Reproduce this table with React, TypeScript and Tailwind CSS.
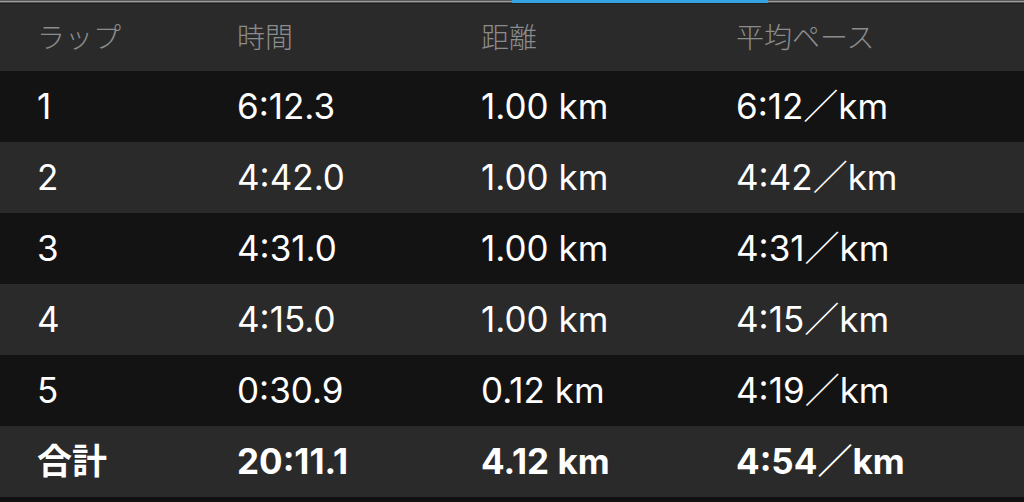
import React from "react";

const rows = [
  ["1", "6:12.3", "1.00 km", "6:12／km"],
  ["2", "4:42.0", "1.00 km", "4:42／km"],
  ["3", "4:31.0", "1.00 km", "4:31／km"],
  ["4", "4:15.0", "1.00 km", "4:15／km"],
  ["5", "0:30.9", "0.12 km", "4:19／km"],
];

const font = { fontFamily: 'Inter, "Noto Sans CJK JP", sans-serif' };

function Lines() {
  return (
    <div className="flex flex-col">
      <div className="h-[1px] bg-[#5a5a5a]" />
      <div className="h-[1px] bg-[#9a9a9a]" />
      <div className="h-[1px] bg-[#555555]" />
      <div className="h-[1px] bg-[#1e1e1e]" />
    </div>
  );
}

export default function App() {
  return (
    <div className="w-[1024px] h-[502px] bg-[#111111] overflow-hidden" style={font}>
      <div className="h-[4px] grid grid-cols-[512px_256px_1fr]">
        <Lines />
        <div className="flex flex-col">
          <div className="h-[3px] bg-[#35a3e3]" />
          <div className="h-[1px] bg-[#1e1e1e]" />
        </div>
        <Lines />
      </div>
      <div className="h-[67px] bg-[#2a2a2a] grid grid-cols-[200px_244px_255px_1fr] items-center pl-[37px] text-[28px] text-[#8c8c8c] font-light">
        <div>ラップ</div>
        <div>時間</div>
        <div>距離</div>
        <div>平均ペース</div>
      </div>
      {rows.map((r, i) => (
        <div
          key={i}
          className={`h-[71px] grid grid-cols-[200px_244px_255px_1fr] items-center pl-[37px] text-[35px] text-white ${
            i % 2 === 0 ? "bg-[#131313]" : "bg-[#2a2a2a]"
          }`}
        >
          {r.map((c, j) => (
            <div key={j}>{c}</div>
          ))}
        </div>
      ))}
      <div className="h-[71px] bg-[#2a2a2a] grid grid-cols-[200px_244px_255px_1fr] items-center pl-[37px] text-[35px] text-white font-bold">
        <div>合計</div>
        <div>20:11.1</div>
        <div>4.12 km</div>
        <div>4:54／km</div>
      </div>
    </div>
  );
}
